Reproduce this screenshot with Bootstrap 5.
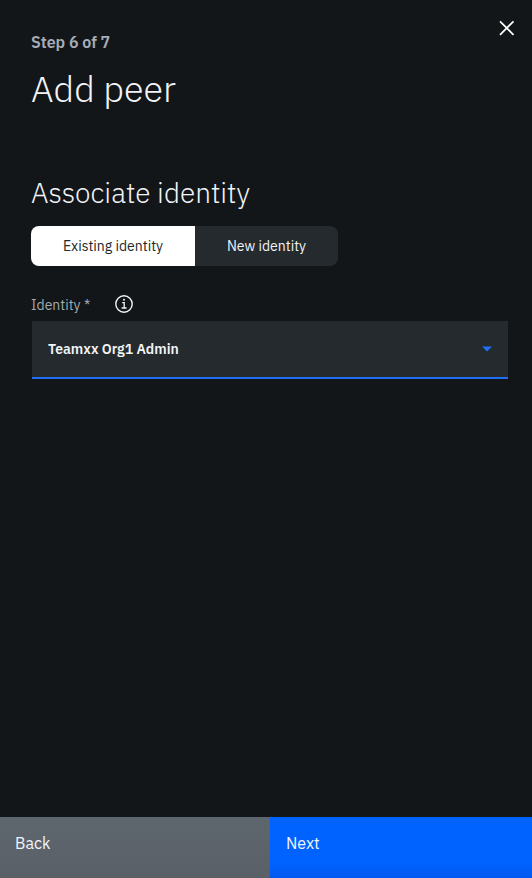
<!DOCTYPE html>
<html lang="en">
<head>
<meta charset="utf-8">
<meta name="viewport" content="width=device-width, initial-scale=1">
<title>Add peer</title>
<link href="https://cdn.jsdelivr.net/npm/bootstrap@5.3.0/dist/css/bootstrap.min.css" rel="stylesheet">
<style>
body{font-family:"IBM Plex Sans",Roboto,"Noto Sans",sans-serif;background:#121619;color:#f2f4f8}
.panel{height:878px;overflow:hidden}
.panel-head{padding:19px 16px 0 31px;height:175px}
.step{font-size:16px;font-weight:600;line-height:20px;color:#a6adb8;margin-top:13px}
.title{font-size:36px;font-weight:300;line-height:44px;margin:15px 0 0}
.close-btn{width:18px;height:18px;line-height:0}
.panel-body{padding:0 24px 0 31px}
.subtitle{font-size:28px;font-weight:300;line-height:36px;margin:0 0 15px}
.switcher{width:307px;height:40px;border-radius:8px;overflow:hidden}
.switcher .btn{font-size:14px;line-height:20px;border-radius:0;padding:0;border:0}
.sw-on{width:164px;background:#fff!important;color:#21272a!important}
.sw-off{width:143px;background:#242a2e!important;color:#f2f4f8!important}
.field-label{font-size:14px;line-height:20px;color:#a2a9b0;width:84px;padding-top:2px}
.field-row{height:20px;margin-top:28px}
.picker{height:58px;margin:7px 0 0 1px;padding:0 16px;background:#242a2e;border-bottom:2px solid #1f70f5;font-size:14px;font-weight:600}
.foot{height:61px}
.foot .btn{border:0;border-radius:0;font-size:16px;line-height:22px;padding:15px 16px 0;text-align:left;align-items:flex-start}
.foot .back{width:270px;padding-left:15px;background:linear-gradient(#5d666e,#5b6067)!important;color:#f2f4f8!important}
.next{background:linear-gradient(#0062ff 75%,#0059ef)!important;color:#f2f4f8!important}
</style>
<script src="https://cdn.jsdelivr.net/npm/bootstrap@5.3.0/dist/js/bootstrap.bundle.min.js"></script>
</head>
<body>
<main class="panel d-flex flex-column">
  <header class="panel-head d-flex justify-content-between align-items-start">
    <div>
      <div class="step">Step 6 of 7</div>
      <h1 class="title">Add peer</h1>
    </div>
    <button type="button" class="btn p-0 border-0 close-btn" aria-label="Close">
      <svg width="18" height="18" viewBox="0 0 18 18" fill="none" stroke="#fff" stroke-width="1.7"><path d="M2 2.3 15.5 15.8M15.5 2.3 2 15.8"/></svg>
    </button>
  </header>
  <section class="panel-body flex-grow-1">
    <h2 class="subtitle">Associate identity</h2>
    <div class="switcher d-flex" role="group">
      <button type="button" class="btn sw-on">Existing identity</button>
      <button type="button" class="btn sw-off">New identity</button>
    </div>
    <div class="field-row d-flex align-items-center">
      <label class="field-label">Identity *</label>
      <svg width="18" height="18" viewBox="0 0 18 18" fill="none" stroke="#f2f4f8"><circle cx="9" cy="9" r="8.2" stroke-width="1.4"/><path d="M7.2 7.7h2v5M6.6 13h5" stroke-width="1.3"/><circle cx="9" cy="4.8" r="1" fill="#f2f4f8" stroke="none"/></svg>
    </div>
    <div class="picker d-flex align-items-center justify-content-between" role="button">
      <span>Teamxx Org1 Admin</span>
      <svg width="10" height="6" viewBox="0 0 10 6"><path d="M0 0.4h10L5 5.6z" fill="#1f70f5"/></svg>
    </div>
  </section>
  <footer class="foot d-flex">
    <button type="button" class="btn d-flex back">Back</button>
    <button type="button" class="btn d-flex flex-grow-1 next">Next</button>
  </footer>
</main>
</body>
</html>
